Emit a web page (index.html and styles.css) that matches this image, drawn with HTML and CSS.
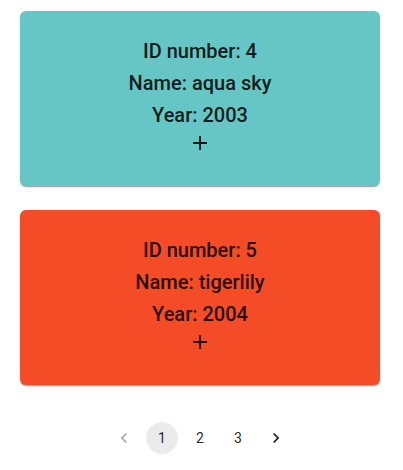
FILE: index.html
```html
<!DOCTYPE html>
<html>
<head>
<meta charset="utf-8">
<link rel="stylesheet" href="styles.css">
</head>
<body>
<div class="page">
  <div class="card teal">
    <p class="line">ID number: 4</p>
    <p class="line">Name: aqua sky</p>
    <p class="line">Year: 2003</p>
    <svg class="plus" viewBox="0 0 24 24" width="24" height="24"><path d="M19 13h-6v6h-2v-6H5v-2h6V5h2v6h6v2z"/></svg>
  </div>
  <div class="card orange">
    <p class="line">ID number: 5</p>
    <p class="line">Name: tigerlily</p>
    <p class="line">Year: 2004</p>
    <svg class="plus" viewBox="0 0 24 24" width="24" height="24"><path d="M19 13h-6v6h-2v-6H5v-2h6V5h2v6h6v2z"/></svg>
  </div>
  <nav class="pager">
    <span class="pbtn disabled"><svg viewBox="0 0 24 24" width="20" height="20"><path d="M15.41 7.41 14 6l-6 6 6 6 1.41-1.41L10.83 12z"/></svg></span>
    <span class="pbtn active">1</span>
    <span class="pbtn">2</span>
    <span class="pbtn">3</span>
    <span class="pbtn"><svg viewBox="0 0 24 24" width="20" height="20"><path d="M10 6 8.59 7.41 13.17 12l-4.58 4.59L10 18l6-6z"/></svg></span>
  </nav>
</div>
</body>
</html>
```
FILE: styles.css
```css
html, body {
  margin: 0;
  padding: 0;
  background: #fff;
}
body {
  font-family: Roboto, "Liberation Sans", sans-serif;
  color: rgba(0, 0, 0, 0.87);
}
.page {
  width: 400px;
  padding: 11px 0 0;
  display: flex;
  flex-direction: column;
  align-items: center;
}
.card {
  width: 360px;
  height: 175px;
  box-sizing: border-box;
  border-radius: 6px;
  padding-top: 24px;
  margin-bottom: 24px;
  display: flex;
  flex-direction: column;
  align-items: center;
  box-shadow: 0 2px 1px -1px rgba(0,0,0,0.2), 0 1px 1px 0 rgba(0,0,0,0.14), 0 1px 3px 0 rgba(0,0,0,0.12);
}
.teal { background: #66c6c5; }
.orange { background: #f34c26; }
.line {
  margin: 0;
  font-size: 20px;
  line-height: 32px;
  font-weight: 500;
}
.plus {
  display: block;
  fill: rgba(0,0,0,0.87);
}
.pager {
  margin-top: 13px;
  display: flex;
  align-items: center;
  gap: 6px;
}
.pbtn {
  width: 32px;
  height: 32px;
  border-radius: 16px;
  display: flex;
  align-items: center;
  justify-content: center;
  font-size: 14px;
  color: rgba(0,0,0,0.87);
}
.pbtn svg { fill: rgba(0,0,0,0.87); }
.pbtn.disabled { opacity: 0.38; }
.pbtn.active { background: rgba(0,0,0,0.08); }
```
